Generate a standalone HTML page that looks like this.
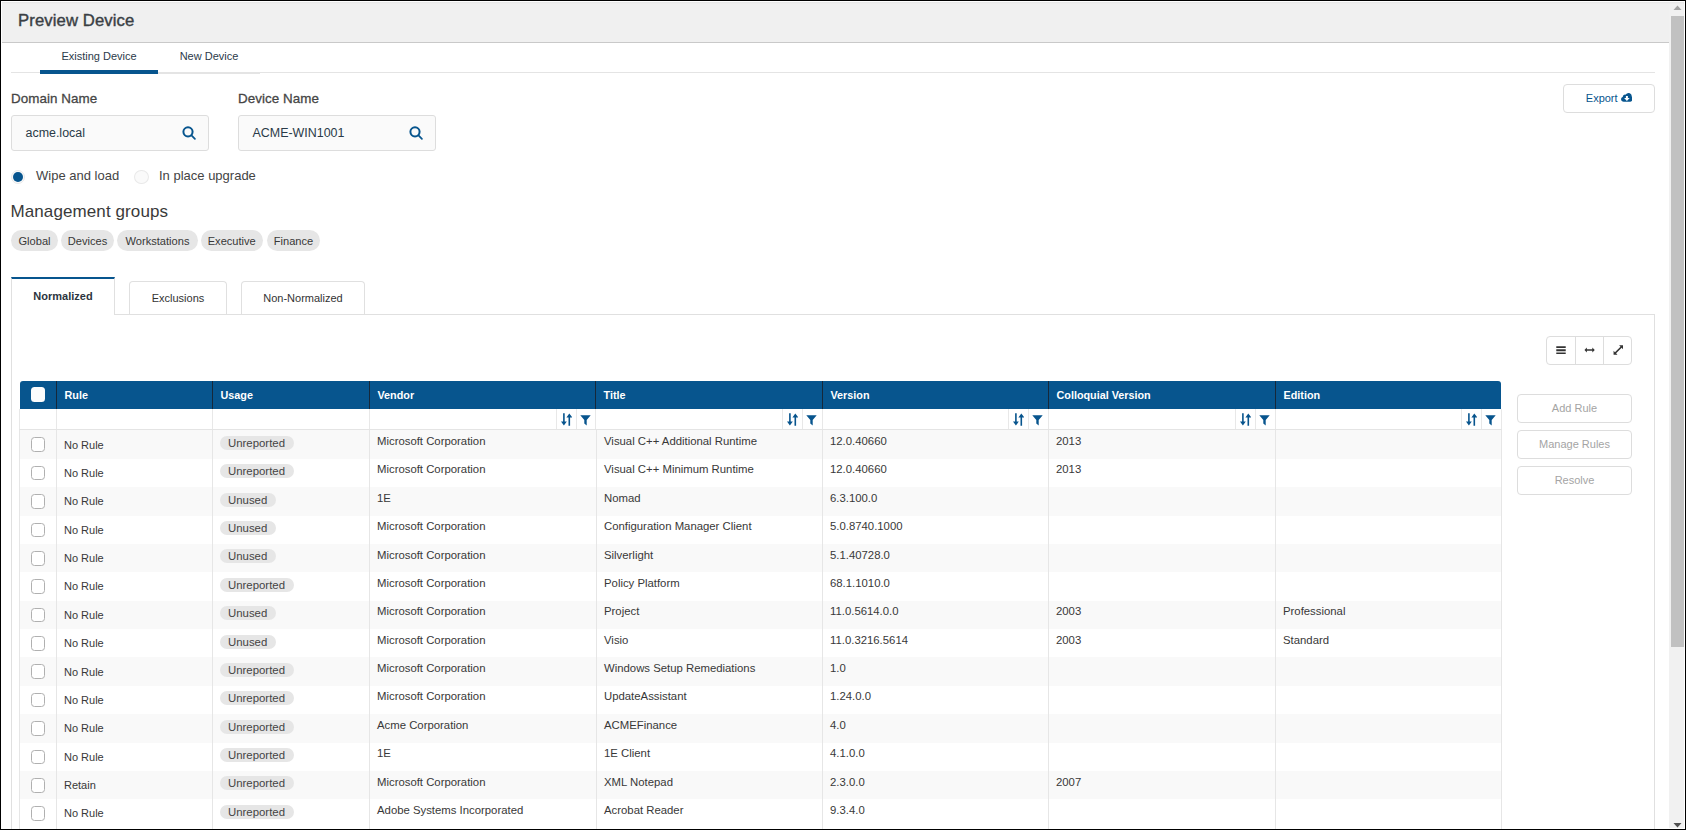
<!DOCTYPE html>
<html lang="en">
<head>
<meta charset="utf-8">
<title>Preview Device</title>
<style>
*{box-sizing:border-box;margin:0;padding:0}
html,body{width:1686px;height:830px;overflow:hidden;background:#fff}
body{position:relative;font-family:"Liberation Sans",sans-serif;color:#333;font-size:12px}
.abs{position:absolute}
.frame{position:absolute;left:0;top:0;width:1686px;height:830px;border:1px solid #000;z-index:50;pointer-events:none}
.hdr{position:absolute;left:2px;top:2px;width:1667px;height:41px;background:#f0f0f0;border-bottom:1px solid #c9c9c9}
.hdrshade{position:absolute;left:2px;top:2px;width:1682px;height:2px;background:linear-gradient(#e6e6e6,#f0f0f0);z-index:3}
.title{position:absolute;left:18px;top:9.5px;font-size:16.7px;line-height:22px;font-weight:normal;-webkit-text-stroke:0.4px #3a3f44;color:#3a3f44;white-space:nowrap;letter-spacing:0.1px}
.tline{position:absolute;background:#e4e4e4}
.tab1{position:absolute;top:49px;height:14px;line-height:14px;font-size:11px;text-align:center;white-space:nowrap;color:#2b3a4a}
.tabbar{position:absolute;left:40px;top:70px;width:118px;height:4px;background:#07558e}
.lbl{position:absolute;top:91px;font-size:13.4px;line-height:16px;font-weight:normal;-webkit-text-stroke:0.28px #454545;color:#454545;white-space:nowrap;letter-spacing:0.05px}
.inp{position:absolute;top:115px;width:198px;height:36px;border:1px solid #ddd;border-radius:3px;background:#fafafa;font-size:12.45px;line-height:34px;padding-left:13.5px;color:#2a3a48;white-space:nowrap}
.inp svg{position:absolute;left:170px;top:9.5px}
.radio{position:absolute;width:14px;height:14px;border-radius:50%;border:1px solid #e9e9e9;background:#fafafa}
.radio.on::after{content:"";position:absolute;left:1.2px;top:1.3px;width:9.8px;height:9.8px;border-radius:50%;background:#07558e}
.rlbl{position:absolute;top:167.5px;font-size:13px;line-height:16px;color:#444;white-space:nowrap}
.mg{position:absolute;left:10.5px;top:201px;font-size:17px;line-height:22px;color:#3a3a3a;white-space:nowrap;letter-spacing:0.1px}
.chip{position:absolute;top:230px;height:21px;border-radius:11px;background:#e6e6e6;font-size:11.1px;line-height:22.6px;text-align:center;color:#383838;white-space:nowrap}
.tab2{position:absolute;font-size:11px;text-align:center;white-space:nowrap;color:#333}
.tab2.act{left:11px;top:277px;width:104px;height:38px;border-top:2px solid #07558e;border-left:1px solid #e0e0e0;border-right:1px solid #e0e0e0;color:#2c3540;background:#fff;font-weight:bold;line-height:34px;z-index:2}
.tab2.in{top:281px;height:33px;border:1px solid #e0e0e0;border-bottom:none;border-radius:4px 4px 0 0;line-height:33px}
.panel{position:absolute;left:11px;top:314px;width:1644px;height:530px;border:1px solid #e0e0e0;border-bottom:none}
.btng{position:absolute;left:1546px;top:336px;width:86px;height:29px;border:1px solid #ddd;border-radius:4px;background:#fff}
.btng i{position:absolute;top:0;width:1px;height:27px;background:#ddd}
.btng svg{position:absolute}
.sbtn{position:absolute;left:1517px;width:115px;height:29px;border:1px solid #ddd;border-radius:4px;background:#fff;font-size:11px;line-height:27px;text-align:center;color:#a4a4a4;white-space:nowrap}
.exp{position:absolute;left:1563px;top:84px;width:92px;height:29px;border:1px solid #ddd;border-radius:4px;background:#fff;font-size:11px;line-height:27px;color:#07558e;white-space:nowrap;padding-left:21.8px}
.exp svg{position:absolute;left:56.5px;top:8.3px}
/* table */
.thead{position:absolute;left:20px;top:381px;width:1481px;height:28px;background:#07558e;border-radius:3px 3px 0 0;overflow:hidden}
.th{position:absolute;top:0;height:28px;border-left:1px solid #16283a;color:#fff;font-weight:bold;font-size:10.8px;line-height:28px;padding-left:7.5px;white-space:nowrap}
.th.first{border-left:none;padding:0}
.hcb{position:absolute;left:11px;top:6px;width:14px;height:15px;border-radius:3.5px;background:#fcfcfc}
.tfilter{position:absolute;left:20px;top:409px;width:1481px;height:21px;background:#fff}
.fl{position:absolute;top:0;width:1px;height:20px;background:#e8e8e8}
.fb{position:absolute;left:-1px;top:20px;width:1483px;height:1px;background:#e4e4e4}
.fi{position:absolute;top:0;width:20px;height:20px}
.fi .isort{position:absolute;left:5.2px;top:3.8px}
.fi .ifilt{position:absolute;left:4.3px;top:5.5px}
.tbody{position:absolute;left:20px;top:430px;width:1481px;height:400px}
.rbg{position:absolute;left:0;width:1481px;background:#f9f9f9}
.vl{position:absolute;top:0;width:1px;height:400px;background:#e6e6e6}
.cb{position:absolute;left:11px;width:14px;height:15px;border:1px solid #b0b0b0;border-radius:3.5px;background:#fff}
.c{position:absolute;padding-left:8px;font-size:11.35px;line-height:14px;height:14px;white-space:nowrap;color:#383838}
.c.rule{margin-top:7.6px;font-size:11px}
.c.txt{margin-top:4.1px}
.pill{position:absolute;height:14px;line-height:14px;border-radius:7px;background:#e6e6e6;padding:0 8.5px 0 8px;font-size:11.4px;color:#444;white-space:nowrap}
/* scrollbar */
.sb{position:absolute;left:1669px;top:2px;width:15px;height:826px;background:#f1f1f1}
.sbthumb{position:absolute;left:1671px;top:16px;width:13px;height:631px;background:#c1c1c1}
.sbw{position:absolute;background:#fff}

</style>
</head>
<body>
<div class="frame"></div>
<div class="hdr"></div>
<div class="hdrshade"></div>
<div class="title">Preview Device</div>

<div class="tline" style="left:11px;top:72px;width:1644px;height:1px"></div>
<div class="tline" style="left:158px;top:72px;width:102px;height:2px"></div>
<div class="tabbar"></div>
<div class="tab1" style="left:40px;width:118px">Existing Device</div>
<div class="tab1" style="left:158px;width:102px">New Device</div>

<div class="lbl" style="left:11px">Domain Name</div>
<div class="lbl" style="left:238px">Device Name</div>
<div class="inp" style="left:11px">acme.local<svg width="14" height="14" viewBox="0 0 14 14"><circle cx="6" cy="5.85" r="4.6" fill="none" stroke="#07558e" stroke-width="2"/><path d="M9.5 9.3L12.9 12.9" stroke="#07558e" stroke-width="1.7" stroke-linecap="round"/></svg></div>
<div class="inp" style="left:238px">ACME-WIN1001<svg width="14" height="14" viewBox="0 0 14 14"><circle cx="6" cy="5.85" r="4.6" fill="none" stroke="#07558e" stroke-width="2"/><path d="M9.5 9.3L12.9 12.9" stroke="#07558e" stroke-width="1.7" stroke-linecap="round"/></svg></div>

<div class="exp">Export<svg width="11.8" height="9" viewBox="0 0 13 10"><path d="M3 9.6C1.3 9.6 0 8.4 0 6.9C0 5.7 0.8 4.7 1.9 4.4C1.9 2.9 3.1 1.8 4.5 1.8C4.8 1.8 5.1 1.85 5.3 1.95C5.9 0.8 7 0 8.4 0C10.3 0 11.8 1.5 11.8 3.4C11.8 3.6 11.8 3.8 11.75 4C12.5 4.4 13 5.2 13 6.2C13 8.2 11.6 9.6 10 9.6Z" fill="#07558e"/><path d="M5.4 3.2h2.2v2.4h2L6.5 8.8L3.4 5.6h2z" fill="#fff"/></svg></div>

<div class="radio on" style="left:11px;top:169.5px"></div>
<div class="rlbl" style="left:36px">Wipe and load</div>
<div class="radio" style="left:134px;top:169.5px;width:15px;height:14.5px"></div>
<div class="rlbl" style="left:159px">In place upgrade</div>

<div class="mg">Management groups</div>
<div class="chip" style="left:11px;width:47px">Global</div>
<div class="chip" style="left:61px;width:53px">Devices</div>
<div class="chip" style="left:117px;width:81px">Workstations</div>
<div class="chip" style="left:201px;width:61.5px">Executive</div>
<div class="chip" style="left:267px;width:53px">Finance</div>

<div class="panel"></div>
<div class="tab2 act">Normalized</div>
<div class="tab2 in" style="left:129px;width:98px">Exclusions</div>
<div class="tab2 in" style="left:241px;width:124px">Non-Normalized</div>

<div class="btng">
<i style="left:28px"></i><i style="left:56px"></i>
<svg style="left:8.8px;top:8.7px" width="10.2" height="8.5" viewBox="0 0 11 9"><path d="M0.3 0.2h10.2v1.9H0.3zM0.3 3.55h10.2v1.9H0.3zM0.3 6.9h10.2v1.9H0.3z" fill="#333"/></svg>
<svg style="left:37px;top:10px" width="11.2" height="6" viewBox="0 0 12 7"><path d="M0 3.5L2.8 0.7V2.7H9.2V0.7L12 3.5L9.2 6.3V4.3H2.8V6.3z" fill="#333"/></svg>
<svg style="left:65.6px;top:8px" width="10.6" height="10" viewBox="0 0 11 11"><path d="M10.7 0.3V4.6L9.2 3.1L3.1 9.2L4.6 10.7H0.3V6.4L1.8 7.9L7.9 1.8L6.4 0.3z" fill="#333"/></svg>
</div>
<div class="sbtn" style="top:394px">Add Rule</div>
<div class="sbtn" style="top:430px">Manage Rules</div>
<div class="sbtn" style="top:466px">Resolve</div>
<div class="thead">
<div class="th first" style="left:0px;width:36px"><span class="hcb"></span></div>
<div class="th" style="left:36px;width:156px"><span class="ht">Rule</span></div>
<div class="th" style="left:192px;width:157px"><span class="ht">Usage</span></div>
<div class="th" style="left:349px;width:226px"><span class="ht">Vendor</span></div>
<div class="th" style="left:575px;width:227px"><span class="ht">Title</span></div>
<div class="th" style="left:802px;width:226px"><span class="ht">Version</span></div>
<div class="th" style="left:1028px;width:227px"><span class="ht">Colloquial Version</span></div>
<div class="th" style="left:1255px;width:226px"><span class="ht">Edition</span></div>
</div>
<div class="tfilter">
<i class="fb"></i>
<i class="fl" style="left:-1px"></i>
<i class="fl" style="left:36px"></i>
<i class="fl" style="left:192px"></i>
<i class="fl" style="left:349px"></i>
<i class="fl" style="left:575px"></i>
<i class="fl" style="left:802px"></i>
<i class="fl" style="left:1028px"></i>
<i class="fl" style="left:1255px"></i>
<i class="fl" style="left:1481px"></i>
<i class="fl" style="left:536px"></i><i class="fl" style="left:556px"></i>
<span class="fi" style="left:536px"><svg class="isort" viewBox="0 0 11 13" width="11" height="13"><path d="M2.9 0.2V10.2M8.3 12.8V2.6" stroke="#07548d" stroke-width="1.6" fill="none"/><path d="M0 8.6h5.8L2.9 12.6zM5.4 4.4h5.8L8.3 0.4z" fill="#07548d"/></svg></span><span class="fi" style="left:556px"><svg class="ifilt" viewBox="0 0 11 11" width="11" height="11"><path d="M0.3 0.3h10.4L6.7 4.9V10.6L4.3 8.4V4.9z" fill="#07548d"/></svg></span>
<i class="fl" style="left:762px"></i><i class="fl" style="left:782px"></i>
<span class="fi" style="left:762px"><svg class="isort" viewBox="0 0 11 13" width="11" height="13"><path d="M2.9 0.2V10.2M8.3 12.8V2.6" stroke="#07548d" stroke-width="1.6" fill="none"/><path d="M0 8.6h5.8L2.9 12.6zM5.4 4.4h5.8L8.3 0.4z" fill="#07548d"/></svg></span><span class="fi" style="left:782px"><svg class="ifilt" viewBox="0 0 11 11" width="11" height="11"><path d="M0.3 0.3h10.4L6.7 4.9V10.6L4.3 8.4V4.9z" fill="#07548d"/></svg></span>
<i class="fl" style="left:988px"></i><i class="fl" style="left:1008px"></i>
<span class="fi" style="left:988px"><svg class="isort" viewBox="0 0 11 13" width="11" height="13"><path d="M2.9 0.2V10.2M8.3 12.8V2.6" stroke="#07548d" stroke-width="1.6" fill="none"/><path d="M0 8.6h5.8L2.9 12.6zM5.4 4.4h5.8L8.3 0.4z" fill="#07548d"/></svg></span><span class="fi" style="left:1008px"><svg class="ifilt" viewBox="0 0 11 11" width="11" height="11"><path d="M0.3 0.3h10.4L6.7 4.9V10.6L4.3 8.4V4.9z" fill="#07548d"/></svg></span>
<i class="fl" style="left:1215px"></i><i class="fl" style="left:1235px"></i>
<span class="fi" style="left:1215px"><svg class="isort" viewBox="0 0 11 13" width="11" height="13"><path d="M2.9 0.2V10.2M8.3 12.8V2.6" stroke="#07548d" stroke-width="1.6" fill="none"/><path d="M0 8.6h5.8L2.9 12.6zM5.4 4.4h5.8L8.3 0.4z" fill="#07548d"/></svg></span><span class="fi" style="left:1235px"><svg class="ifilt" viewBox="0 0 11 11" width="11" height="11"><path d="M0.3 0.3h10.4L6.7 4.9V10.6L4.3 8.4V4.9z" fill="#07548d"/></svg></span>
<i class="fl" style="left:1441px"></i><i class="fl" style="left:1461px"></i>
<span class="fi" style="left:1441px"><svg class="isort" viewBox="0 0 11 13" width="11" height="13"><path d="M2.9 0.2V10.2M8.3 12.8V2.6" stroke="#07548d" stroke-width="1.6" fill="none"/><path d="M0 8.6h5.8L2.9 12.6zM5.4 4.4h5.8L8.3 0.4z" fill="#07548d"/></svg></span><span class="fi" style="left:1461px"><svg class="ifilt" viewBox="0 0 11 11" width="11" height="11"><path d="M0.3 0.3h10.4L6.7 4.9V10.6L4.3 8.4V4.9z" fill="#07548d"/></svg></span>
</div>
<div class="tbody">
<div class="rbg" style="top:0px;height:29px"></div>
<div class="rbg" style="top:57px;height:29px"></div>
<div class="rbg" style="top:114px;height:28px"></div>
<div class="rbg" style="top:171px;height:28px"></div>
<div class="rbg" style="top:227px;height:29px"></div>
<div class="rbg" style="top:284px;height:29px"></div>
<div class="rbg" style="top:341px;height:28px"></div>
<i class="vl" style="left:-1px"></i>
<i class="vl" style="left:36px"></i>
<i class="vl" style="left:192px"></i>
<i class="vl" style="left:349px"></i>
<i class="vl" style="left:576px"></i>
<i class="vl" style="left:802px"></i>
<i class="vl" style="left:1028px"></i>
<i class="vl" style="left:1255px"></i>
<i class="vl" style="left:1481px"></i>
<span class="cb" style="top:7px;height:15px"></span>
<span class="c rule" style="left:36px;top:0px">No Rule</span>
<span class="pill" style="left:200px;top:6px">Unreported</span>
<span class="c txt" style="left:349px;top:0px">Microsoft Corporation</span>
<span class="c txt" style="left:576px;top:0px">Visual C++ Additional Runtime</span>
<span class="c txt" style="left:802px;top:0px">12.0.40660</span>
<span class="c txt" style="left:1028px;top:0px">2013</span>
<span class="cb" style="top:36px;height:14px"></span>
<span class="c rule" style="left:36px;top:28px">No Rule</span>
<span class="pill" style="left:200px;top:34px">Unreported</span>
<span class="c txt" style="left:349px;top:28px">Microsoft Corporation</span>
<span class="c txt" style="left:576px;top:28px">Visual C++ Minimum Runtime</span>
<span class="c txt" style="left:802px;top:28px">12.0.40660</span>
<span class="c txt" style="left:1028px;top:28px">2013</span>
<span class="cb" style="top:64px;height:15px"></span>
<span class="c rule" style="left:36px;top:56px">No Rule</span>
<span class="pill" style="left:200px;top:63px">Unused</span>
<span class="c txt" style="left:349px;top:57px">1E</span>
<span class="c txt" style="left:576px;top:57px">Nomad</span>
<span class="c txt" style="left:802px;top:57px">6.3.100.0</span>
<span class="cb" style="top:93px;height:14px"></span>
<span class="c rule" style="left:36px;top:85px">No Rule</span>
<span class="pill" style="left:200px;top:91px">Unused</span>
<span class="c txt" style="left:349px;top:85px">Microsoft Corporation</span>
<span class="c txt" style="left:576px;top:85px">Configuration Manager Client</span>
<span class="c txt" style="left:802px;top:85px">5.0.8740.1000</span>
<span class="cb" style="top:121px;height:15px"></span>
<span class="c rule" style="left:36px;top:113px">No Rule</span>
<span class="pill" style="left:200px;top:119px">Unused</span>
<span class="c txt" style="left:349px;top:114px">Microsoft Corporation</span>
<span class="c txt" style="left:576px;top:114px">Silverlight</span>
<span class="c txt" style="left:802px;top:114px">5.1.40728.0</span>
<span class="cb" style="top:149px;height:15px"></span>
<span class="c rule" style="left:36px;top:141px">No Rule</span>
<span class="pill" style="left:200px;top:148px">Unreported</span>
<span class="c txt" style="left:349px;top:142px">Microsoft Corporation</span>
<span class="c txt" style="left:576px;top:142px">Policy Platform</span>
<span class="c txt" style="left:802px;top:142px">68.1.1010.0</span>
<span class="cb" style="top:178px;height:14px"></span>
<span class="c rule" style="left:36px;top:170px">No Rule</span>
<span class="pill" style="left:200px;top:176px">Unused</span>
<span class="c txt" style="left:349px;top:170px">Microsoft Corporation</span>
<span class="c txt" style="left:576px;top:170px">Project</span>
<span class="c txt" style="left:802px;top:170px">11.0.5614.0.0</span>
<span class="c txt" style="left:1028px;top:170px">2003</span>
<span class="c txt" style="left:1255px;top:170px">Professional</span>
<span class="cb" style="top:206px;height:15px"></span>
<span class="c rule" style="left:36px;top:198px">No Rule</span>
<span class="pill" style="left:200px;top:205px">Unused</span>
<span class="c txt" style="left:349px;top:199px">Microsoft Corporation</span>
<span class="c txt" style="left:576px;top:199px">Visio</span>
<span class="c txt" style="left:802px;top:199px">11.0.3216.5614</span>
<span class="c txt" style="left:1028px;top:199px">2003</span>
<span class="c txt" style="left:1255px;top:199px">Standard</span>
<span class="cb" style="top:234px;height:15px"></span>
<span class="c rule" style="left:36px;top:227px">No Rule</span>
<span class="pill" style="left:200px;top:233px">Unreported</span>
<span class="c txt" style="left:349px;top:227px">Microsoft Corporation</span>
<span class="c txt" style="left:576px;top:227px">Windows Setup Remediations</span>
<span class="c txt" style="left:802px;top:227px">1.0</span>
<span class="cb" style="top:263px;height:14px"></span>
<span class="c rule" style="left:36px;top:255px">No Rule</span>
<span class="pill" style="left:200px;top:261px">Unreported</span>
<span class="c txt" style="left:349px;top:255px">Microsoft Corporation</span>
<span class="c txt" style="left:576px;top:255px">UpdateAssistant</span>
<span class="c txt" style="left:802px;top:255px">1.24.0.0</span>
<span class="cb" style="top:291px;height:15px"></span>
<span class="c rule" style="left:36px;top:283px">No Rule</span>
<span class="pill" style="left:200px;top:290px">Unreported</span>
<span class="c txt" style="left:349px;top:284px">Acme Corporation</span>
<span class="c txt" style="left:576px;top:284px">ACMEFinance</span>
<span class="c txt" style="left:802px;top:284px">4.0</span>
<span class="cb" style="top:320px;height:14px"></span>
<span class="c rule" style="left:36px;top:312px">No Rule</span>
<span class="pill" style="left:200px;top:318px">Unreported</span>
<span class="c txt" style="left:349px;top:312px">1E</span>
<span class="c txt" style="left:576px;top:312px">1E Client</span>
<span class="c txt" style="left:802px;top:312px">4.1.0.0</span>
<span class="cb" style="top:348px;height:15px"></span>
<span class="c rule" style="left:36px;top:340px">Retain</span>
<span class="pill" style="left:200px;top:346px">Unreported</span>
<span class="c txt" style="left:349px;top:341px">Microsoft Corporation</span>
<span class="c txt" style="left:576px;top:341px">XML Notepad</span>
<span class="c txt" style="left:802px;top:341px">2.3.0.0</span>
<span class="c txt" style="left:1028px;top:341px">2007</span>
<span class="cb" style="top:376px;height:15px"></span>
<span class="c rule" style="left:36px;top:368px">No Rule</span>
<span class="pill" style="left:200px;top:375px">Unreported</span>
<span class="c txt" style="left:349px;top:369px">Adobe Systems Incorporated</span>
<span class="c txt" style="left:576px;top:369px">Acrobat Reader</span>
<span class="c txt" style="left:802px;top:369px">9.3.4.0</span>
</div>
<div class="sb"></div>
<div class="sbthumb"></div>
<svg class="abs" style="left:1673px;top:5px" width="9" height="6" viewBox="0 0 9 6"><path d="M4.5 0.5L8.5 5H0.5z" fill="#a3a3a3"/></svg>
<svg class="abs" style="left:1673px;top:822px" width="9" height="6" viewBox="0 0 9 6"><path d="M0.5 1H8.5L4.5 5.5z" fill="#505050"/></svg>
<div class="sbw" style="left:1px;top:1px;width:1684px;height:1px"></div>
<div class="sbw" style="left:1669px;top:828px;width:16px;height:1px"></div>
<div class="sbw" style="left:1px;top:1px;width:1px;height:828px"></div>
<div class="sbw" style="left:1684px;top:1px;width:1px;height:828px"></div>
</body>
</html>
